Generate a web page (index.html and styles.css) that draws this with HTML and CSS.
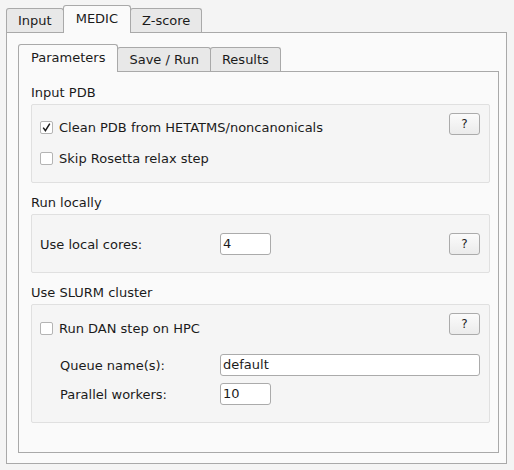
FILE: index.html
```html
<!DOCTYPE html>
<html>
<head>
<meta charset="utf-8">
<link rel="stylesheet" href="styles.css">
</head>
<body>
<div class="app">
  <div class="tabbar">
    <div class="tab">Input</div>
    <div class="tab active">MEDIC</div>
    <div class="tab">Z-score</div>
  </div>
  <div class="pane outer">
    <div class="tabbar">
      <div class="tab active">Parameters</div>
      <div class="tab">Save / Run</div>
      <div class="tab">Results</div>
    </div>
    <div class="pane inner">
      <div class="section-label">Input PDB</div>
      <div class="group g1">
        <div class="group-main">
          <div class="check-row"><span class="box"><svg width="11" height="11" viewBox="0 0 11 11"><path d="M2.2 5.6 L4.4 8.6 L8.8 1.6" fill="none" stroke="#1a1a1a" stroke-width="1.5"/></svg></span>Clean PDB from HETATMS/noncanonicals</div>
          <div class="check-row"><span class="box"></span>Skip Rosetta relax step</div>
        </div>
        <button class="help">?</button>
      </div>

      <div class="section-label">Run locally</div>
      <div class="group g2">
        <div class="field-row">
          <span class="field-label">Use local cores:</span>
          <span class="input small">4</span>
        </div>
        <button class="help">?</button>
      </div>

      <div class="section-label">Use SLURM cluster</div>
      <div class="group g3">
        <div class="g3-top">
          <div class="check-row"><span class="box"></span>Run DAN step on HPC</div>
          <button class="help">?</button>
        </div>
        <div class="field-row sub">
          <span class="field-label">Queue name(s):</span>
          <span class="input wide">default</span>
        </div>
        <div class="field-row sub">
          <span class="field-label">Parallel workers:</span>
          <span class="input small">10</span>
        </div>
      </div>
    </div>
  </div>
</div>
</body>
</html>
```

FILE: styles.css
```css
* { box-sizing: border-box; }
html, body {
  margin: 0;
  padding: 0;
  background: #f4f4f4;
}
body {
  font-family: "DejaVu Sans", sans-serif;
  font-size: 13px;
  color: #1b1b1b;
}
.app {
  height: 470px;
  padding: 5px 7px 6px 6px;
  display: flex;
  flex-direction: column;
}
.tabbar {
  display: flex;
  align-items: flex-end;
  flex: none;
}
.tab {
  height: 24px;
  line-height: 23px;
  padding: 0 11px;
  border: 1px solid #a9a9a9;
  border-bottom: none;
  border-radius: 3px 3px 0 0;
  background: #e8e8e8;
  white-space: nowrap;
}
.tab + .tab { margin-left: -1px; }
.tab.active {
  height: 28px;
  line-height: 26px;
  margin-bottom: -1px;
  padding: 0 12px;
  background: #fafafa;
  position: relative;
  z-index: 1;
}
.pane {
  border: 1px solid #a9a9a9;
  background: #fafafa;
  flex: 1;
  display: flex;
  flex-direction: column;
}
.pane.outer {
  padding: 11px 7px 10px 11px;
}
.pane.inner {
  padding: 13px 8px 0 12px;
}
.section-label {
  height: 15px;
  line-height: 15px;
  margin-bottom: 4px;
}
.group + .section-label { margin-top: 12px; }
.group {
  border: 1px solid #e0e0e0;
  border-radius: 2px;
  background: #f5f5f5;
  display: flex;
  align-items: flex-start;
  padding: 0 9px 0 8px;
}
.g1 { padding-top: 7px; padding-bottom: 8px; }
.group-main { flex: 1; }
.check-row {
  height: 31px;
  display: flex;
  align-items: center;
}
.box {
  width: 13px;
  height: 13px;
  border: 1px solid #b4b4b4;
  border-radius: 2px;
  background: #fff;
  margin-right: 6px;
  display: flex;
  align-items: center;
  justify-content: center;
  flex: none;
}
.help {
  width: 31px;
  height: 22px;
  border: 1px solid #ababab;
  border-radius: 3px;
  background: linear-gradient(#fbfbfb, #ebebeb);
  font-family: "DejaVu Sans", sans-serif;
  font-size: 12px;
  color: #222;
  padding: 0;
  margin: 0;
  flex: none;
}
.g1 .help { margin-top: 1px; }
.g2 {
  padding-top: 18px;
  padding-bottom: 17px;
  align-items: center;
}
.field-row {
  display: flex;
  align-items: center;
  height: 22px;
  flex: 1;
}
.field-label {
  width: 180px;
  flex: none;
}
.input {
  height: 22px;
  line-height: 20px;
  border: 1px solid #ababab;
  border-radius: 3px;
  background: #fff;
  padding: 0 2px;
}
.input.small { width: 51px; }
.input.wide { flex: 1; }
.g3 {
  flex-direction: column;
  align-items: stretch;
  padding-top: 8px;
  padding-bottom: 17px;
}
.g3-top {
  display: flex;
  align-items: flex-start;
  justify-content: space-between;
  height: 31px;
  margin-bottom: 10px;
}
.field-row.sub {
  padding-left: 20px;
}
.field-row.sub .field-label { width: 160px; }
.field-row.sub + .field-row.sub { margin-top: 7px; }
```
